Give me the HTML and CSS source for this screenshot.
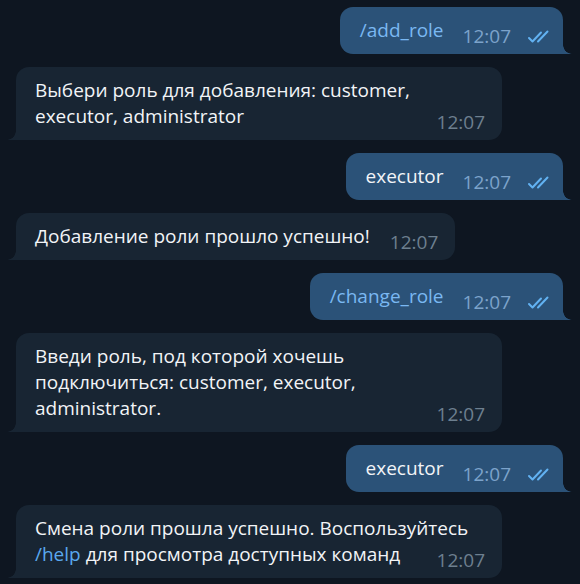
FILE: index.html
```html
<!DOCTYPE html>
<html lang="ru">
<head>
<meta charset="utf-8">
<title>Chat</title>
<link rel="stylesheet" href="styles.css">
</head>
<body>
<div class="chat">
  <div class="msg out"><span class="cmd">/add_role</span><span class="meta"><span class="time">12:07</span><svg class="check" width="26" height="14" viewBox="0 0 26 14"><path d="M2 8 L5.5 11.5 L14 2.5 M11 11.5 L20.5 1.5"/></svg></span></div>
  <div class="msg in">Выбери роль для добавления: customer, executor, administrator<span class="meta"><span class="time">12:07</span></span></div>
  <div class="msg out">executor<span class="meta"><span class="time">12:07</span><svg class="check" width="26" height="14" viewBox="0 0 26 14"><path d="M2 8 L5.5 11.5 L14 2.5 M11 11.5 L20.5 1.5"/></svg></span></div>
  <div class="msg in">Добавление роли прошло успешно!<span class="meta"><span class="time">12:07</span></span></div>
  <div class="msg out"><span class="cmd">/change_role</span><span class="meta"><span class="time">12:07</span><svg class="check" width="26" height="14" viewBox="0 0 26 14"><path d="M2 8 L5.5 11.5 L14 2.5 M11 11.5 L20.5 1.5"/></svg></span></div>
  <div class="msg in">Введи роль, под которой хочешь подключиться: customer, executor, administrator.<span class="meta"><span class="time">12:07</span></span></div>
  <div class="msg out">executor<span class="meta"><span class="time">12:07</span><svg class="check" width="26" height="14" viewBox="0 0 26 14"><path d="M2 8 L5.5 11.5 L14 2.5 M11 11.5 L20.5 1.5"/></svg></span></div>
  <div class="msg in">Смена роли прошла успешно. Воспользуйтесь <span class="link">/help</span> для просмотра доступных команд<span class="meta"><span class="time">12:07</span></span></div>
</div>
</body>
</html>
```
FILE: styles.css
```css
html, body {
  margin: 0;
  padding: 0;
  background: #0e1621;
}
body {
  width: 580px;
  height: 584px;
  overflow: hidden;
  font-family: "Open Sans", "Noto Sans", sans-serif;
}
.chat {
  display: flex;
  flex-direction: column;
  gap: 13px;
  padding: 7px 17px 0 16px;
}
.msg {
  position: relative;
  max-width: 486px;
  box-sizing: border-box;
  font-size: 19px;
  line-height: 26px;
  color: #f2f4f7;
  padding: 10px 17px 8px 19px;
}
.msg.in {
  align-self: flex-start;
  background: #182533;
  border-radius: 13px 13px 13px 0;
}
.msg.out {
  align-self: flex-end;
  background: #2b5278;
  border-radius: 13px 13px 0 13px;
  padding-left: 20px;
  padding-right: 10px;
}
.msg.in::after,
.msg.out::after {
  content: "";
  position: absolute;
  bottom: 0;
  width: 9px;
  height: 9px;
}
.msg.out::after {
  right: -9px;
  background: radial-gradient(circle 9px at 100% 0, transparent 8.5px, #2b5278 9px);
}
.msg.in::after {
  left: -9px;
  background: radial-gradient(circle 9px at 0 0, transparent 8.5px, #182533 9px);
}
.cmd {
  color: #7ab8f2;
}
.link {
  color: #5aa9ef;
}
.meta {
  float: right;
  font-size: 19px;
  line-height: 20px;
  margin-top: 9px;
  margin-left: 20px;
  white-space: nowrap;
}
.msg.out .meta {
  margin-left: 19px;
}
.in .time {
  color: #6d7f8f;
}
.out .time {
  color: #7ca3cb;
}
.check {
  margin-left: 16px;
  vertical-align: -1px;
  fill: none;
  stroke: #62b2f2;
  stroke-width: 2;
  stroke-linecap: round;
  stroke-linejoin: round;
}
```
